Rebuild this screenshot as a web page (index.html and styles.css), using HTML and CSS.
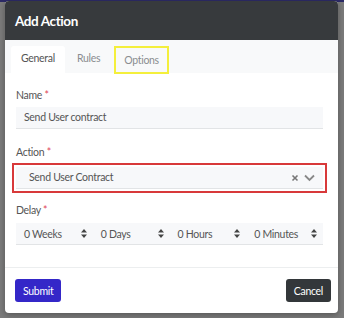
FILE: index.html
```html
<!DOCTYPE html>
<html lang="en">
<head>
    <meta charset="UTF-8">
    <title>Add Action</title>
    <link rel="stylesheet" href="styles.css">
</head>
<body>
    <div class="backdrop">
        <div class="page-strip"></div>
        <div class="modal">
            <div class="modal-header">
                <h2>Add Action</h2>
            </div>
            <div class="tabs">
                <span class="tab active">General</span>
                <span class="tab">Rules</span>
                <span class="tab marked">Options</span>
            </div>
            <div class="modal-body">
                <label class="field-label">Name <span class="req">*</span></label>
                <div class="input">Send User contract</div>

                <label class="field-label">Action <span class="req">*</span></label>
                <div class="highlight">
                    <div class="input select">
                        <span>Send User Contract</span>
                        <span class="select-icons">
                            <svg width="8" height="8" viewBox="0 0 8 8"><path d="M1.5 1.5 L6.5 6.5 M6.5 1.5 L1.5 6.5" stroke="#777" stroke-width="1.6"/></svg>
                            <svg width="11" height="8" viewBox="0 0 11 8"><path d="M1 1.5 L5.5 6 L10 1.5" fill="none" stroke="#888" stroke-width="1.8"/></svg>
                        </span>
                    </div>
                </div>

                <label class="field-label">Delay <span class="req">*</span></label>
                <div class="delay-row">
                    <div class="delay-field"><span>0 Weeks</span><svg class="spin" width="6" height="9" viewBox="0 0 6 9"><path d="M3 0 L6 3.5 H0 Z M3 9 L0 5.5 H6 Z" fill="#444"/></svg></div>
                    <div class="delay-field"><span>0 Days</span><svg class="spin" width="6" height="9" viewBox="0 0 6 9"><path d="M3 0 L6 3.5 H0 Z M3 9 L0 5.5 H6 Z" fill="#444"/></svg></div>
                    <div class="delay-field"><span>0 Hours</span><svg class="spin" width="6" height="9" viewBox="0 0 6 9"><path d="M3 0 L6 3.5 H0 Z M3 9 L0 5.5 H6 Z" fill="#444"/></svg></div>
                    <div class="delay-field"><span>0 Minutes</span><svg class="spin" width="6" height="9" viewBox="0 0 6 9"><path d="M3 0 L6 3.5 H0 Z M3 9 L0 5.5 H6 Z" fill="#444"/></svg></div>
                </div>
            </div>
            <div class="modal-footer">
                <button class="btn btn-submit">Submit</button>
                <button class="btn btn-cancel">Cancel</button>
            </div>
        </div>
    </div>
</body>
</html>
```

FILE: styles.css
```css
body {
    margin: 0;
    font-family: Lato, "Open Sans", sans-serif;
    background: #7b7b7b;
    overflow: hidden;
}
.backdrop {
    position: relative;
    height: 318px;
    padding: 1px 6px 0 5px;
    box-sizing: border-box;
}
.page-strip {
    position: absolute;
    top: 0;
    left: 0;
    right: 0;
    height: 2px;
    background: #2c2a66;
}
.modal {
    position: relative;
    background: #fff;
    border-radius: 4px;
    overflow: hidden;
    box-shadow: 0 2px 6px rgba(0, 0, 0, 0.3);
}
.modal-header {
    background: #373a3d;
    height: 39px;
    display: flex;
    align-items: center;
    padding: 0 10px;
}
.modal-header h2 {
    margin: 0;
    color: #fff;
    font-size: 13.5px;
    letter-spacing: -0.4px;
    font-weight: bold;
}
.tabs {
    background: #f8f9fa;
    display: flex;
    align-items: flex-end;
    padding: 6px 6px 0;
    height: 33px;
    box-sizing: border-box;
}
.tab {
    font-size: 10.5px;
    letter-spacing: -0.3px;
    color: #8a8d90;
    padding: 0 10px;
    height: 27px;
    line-height: 25px;
    box-sizing: border-box;
    margin-right: 2px;
}
.tab.active {
    background: #fff;
    color: #555;
    border-radius: 3px 3px 0 0;
}
.tab.marked {
    border: 2px solid #f4ef3c;
    padding: 0 8px;
    height: 28px;
    margin-bottom: -1px;
    margin-left: 2px;
}
.modal-body {
    padding: 15px 15px 22px 11px;
}
.field-label {
    display: block;
    font-size: 10.5px;
    letter-spacing: -0.3px;
    color: #555;
    line-height: 14px;
    margin-bottom: 5px;
}
.req {
    color: #e0465a;
}
.input {
    background: #f7f8fa;
    border-bottom: 1px solid #e2e4e6;
    height: 22px;
    box-sizing: border-box;
    padding: 0 8px;
    font-size: 10.5px;
    letter-spacing: -0.3px;
    color: #555;
    line-height: 21px;
    margin-bottom: 16px;
}
.highlight {
    border: 2px solid #d8393a;
    padding: 2px;
    margin: -1px -4px 10px -4px;
}
.select {
    display: flex;
    justify-content: space-between;
    align-items: center;
    margin-bottom: 0;
    padding: 0 8px 0 13px;
}
.select-icons {
    display: flex;
    align-items: center;
    gap: 5px;
}
.delay-row {
    display: grid;
    grid-template-columns: repeat(4, 1fr);
    background: #f7f8fa;
    border-bottom: 1px solid #e2e4e6;
    height: 21px;
    margin-top: 6px;
}
.delay-field {
    display: flex;
    justify-content: space-between;
    align-items: center;
    font-size: 10.5px;
    letter-spacing: -0.3px;
    color: #555;
    padding: 0 6px 0 8px;
}
.modal-footer {
    border-top: 1px solid #eceeef;
    display: flex;
    justify-content: space-between;
    padding: 11px 7px 11px 10px;
}
.btn {
    font-family: Lato, "Open Sans", sans-serif;
    font-size: 10.5px;
    letter-spacing: -0.3px;
    color: #fff;
    border: none;
    border-radius: 3px;
    height: 23px;
    padding: 0 8px;
}
.btn-submit {
    background: #3427c8;
}
.btn-cancel {
    background: #33373a;
}
```
